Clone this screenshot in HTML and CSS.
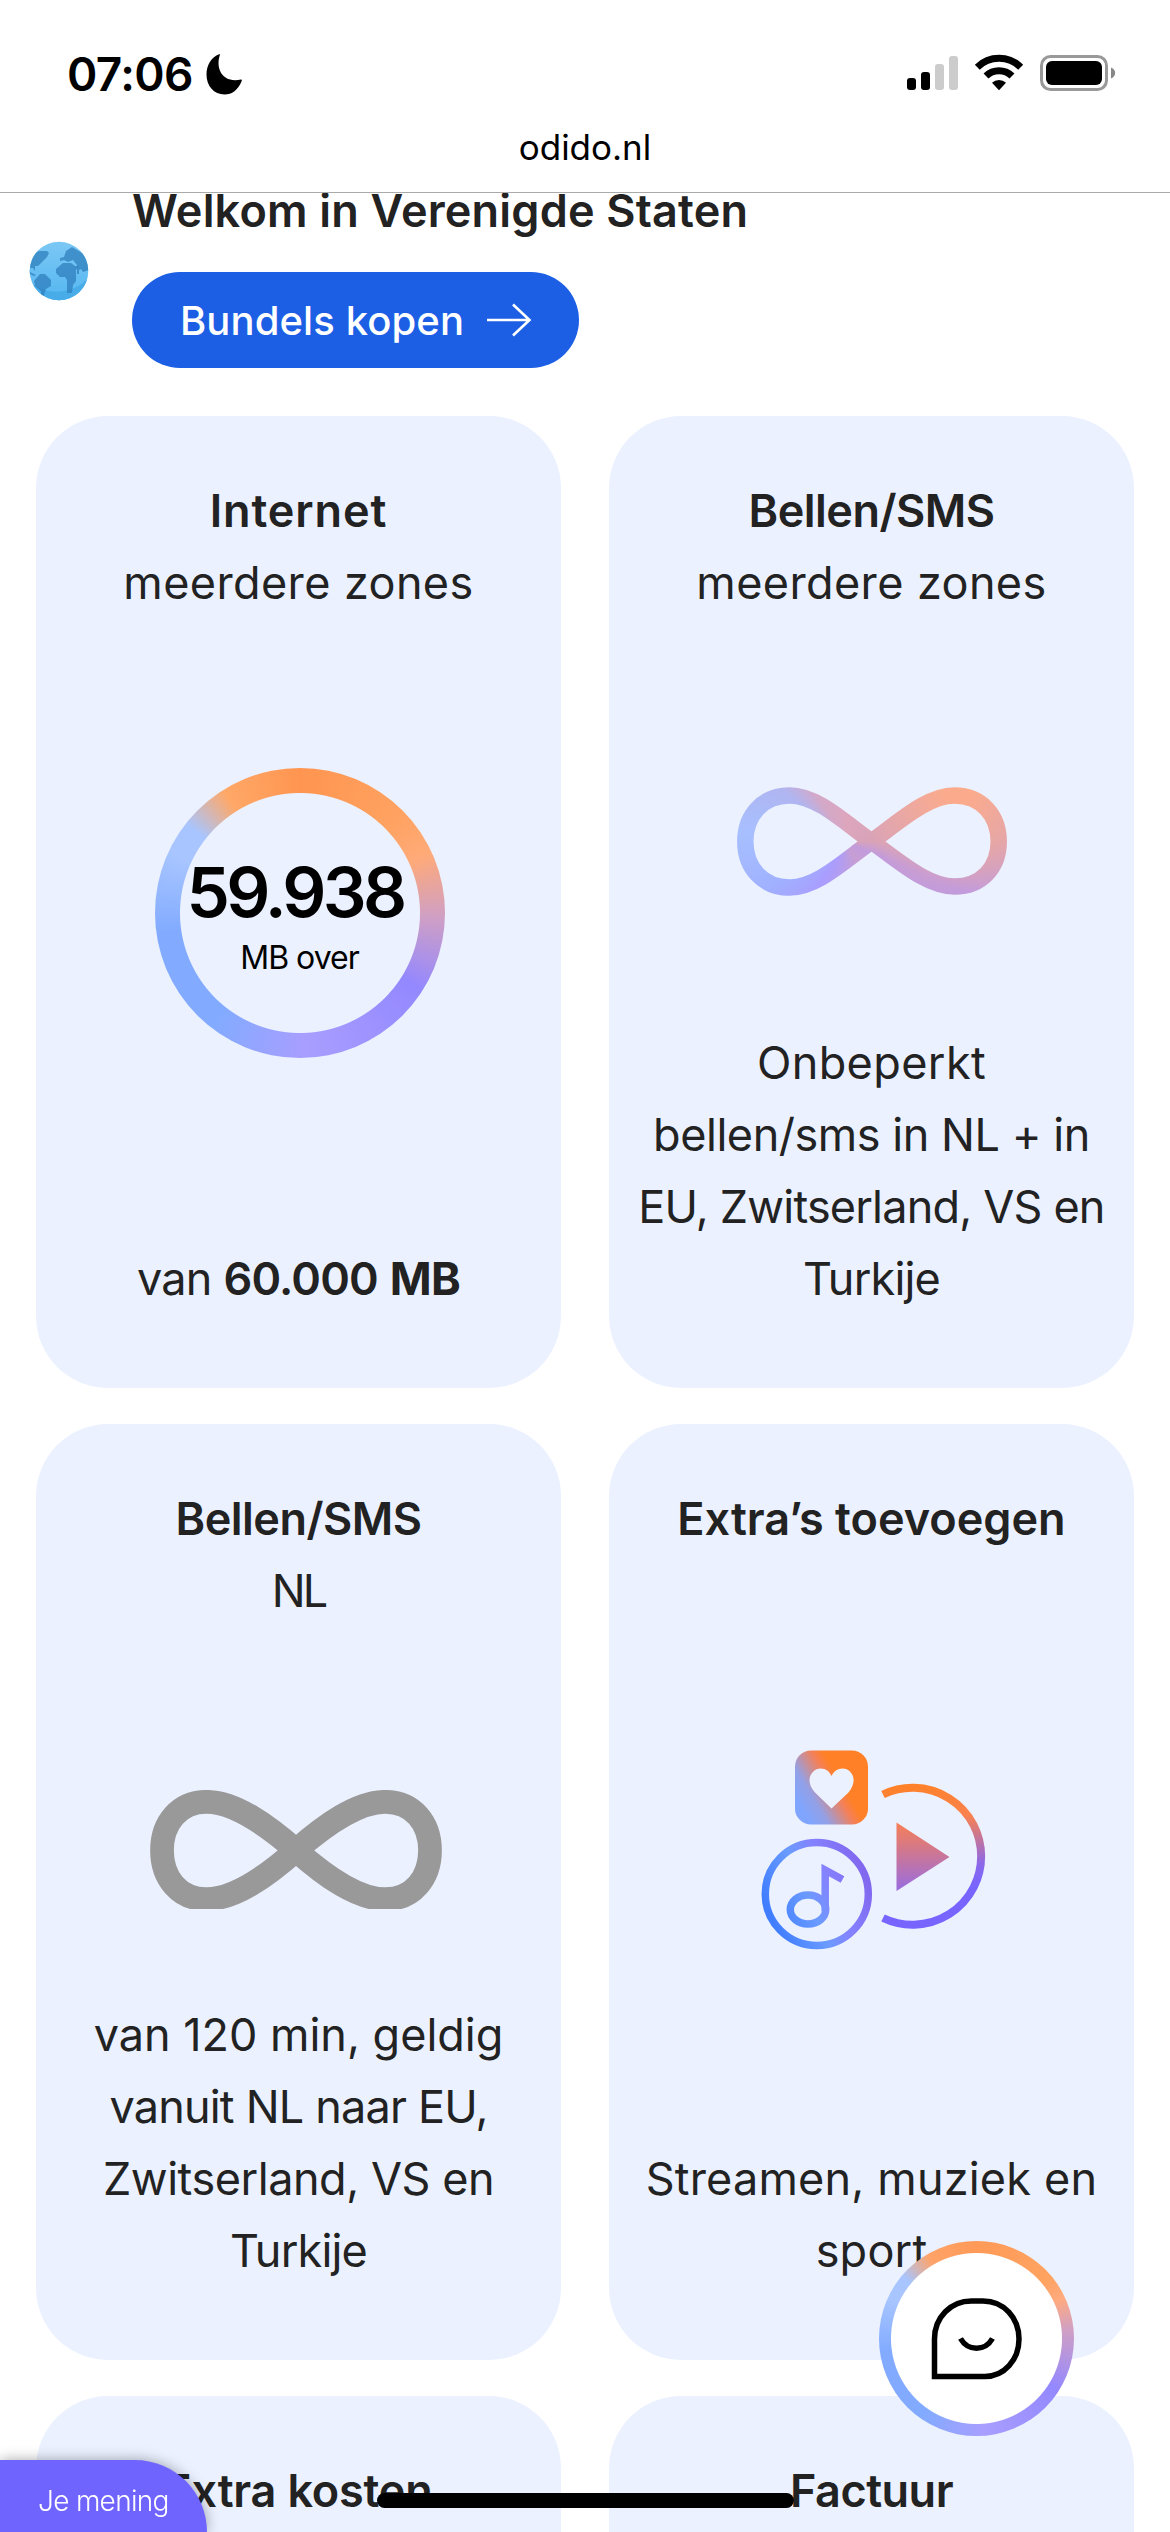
FILE: index.html
```html
<!DOCTYPE html>
<html lang="nl">
<head>
	<meta charset="UTF-8">
	<title>odido.nl</title>
	<link rel="stylesheet" href="styles.css">
</head>
<body>
	<div id="topbar">
		<div class="status">
			<span class="time">07:06</span>
			<svg class="moon" width="36" height="41" viewBox="0 0 36 41">
				<path d="M14 0.5C9 15 17 29.500 35 25.500C36 25.300 36 26 35.500 27.500C32 36 26 40.500 18.500 40.500C8 40.500 0.500 32 0.500 20.500C0.500 11 5.500 3.500 12.500 0.600C13.500 0.200 14.200 0 14 0.500Z"/>
			</svg>
			<svg class="signals" width="212" height="40" viewBox="0 0 212 40">
				<rect x="0" y="24" width="9" height="12" rx="3"/>
				<rect x="14" y="18" width="9" height="18" rx="3"/>
				<g fill="#ccc">
					<rect x="28" y="10" width="9" height="26" rx="3"/>
					<rect x="42" y="2" width="9" height="34" rx="3"/>
				</g>
				<g fill="none" stroke="#000" stroke-width="7">
					<path d="M70.300 13.200A31 31 0 0 1 113.700 13.200"/>
					<path d="M79 22A18.500 18.500 0 0 1 105 22"/>
				</g>
				<path d="M92 36.300L85 28.800A10 10 0 0 1 99 28.800Z"/>
				<rect x="134.500" y="2.500" width="65" height="33" rx="9" fill="none" stroke="#999" stroke-width="3"/>
				<rect x="139" y="7" width="56" height="24" rx="6"/>
				<path d="M204 13.500C209.500 15.500 209.500 22.500 204 24.500Z" fill="#888"/>
			</svg>
		</div>
		<p class="url">odido.nl</p>
	</div>

	<div id="page">
		<div class="welcome">
			<svg class="globe" width="60" height="60" viewBox="0 0 60 60">
				<defs>
					<linearGradient id="sea" x1="0" y1="0" x2="0" y2="1">
						<stop offset="0" stop-color="#7cc8f5"/>
						<stop offset="1" stop-color="#54b6f0"/>
					</linearGradient>
					<clipPath id="ball"><circle cx="30" cy="30" r="29.300"/></clipPath>
				</defs>
				<g clip-path="url(#ball)">
					<rect width="60" height="60" fill="url(#sea)"/>
					<path d="M0 39C12 55 45 55 60 36V60H0Z" fill="#47ace8"/>
					<g fill="#2f7fbd" fill-opacity=".75">
						<path d="M0 15L10 10H18L20 12L18 16L9 25H6V30L4 27H1V31L7 34L5 35L-1 32Z"/>
						<path d="M5 40L11 33H16L22 39V45L17 48L15 54V59L12 57V50L6 45Z"/>
						<path d="M27 28L34 22H42L46 25H50L47 29V40L44 44L43 52H38V39L36 36H31L27 32Z"/>
						<path d="M31 17L35 16L37 10L43 6L60 16V29L54 31L52 28L50 29V33H48V24L44 19L39 21L35 19L31 20Z"/>
					</g>
				</g>
			</svg>
			<div>
				<h2>Welkom in Verenigde Staten</h2>
				<a class="button" href="#">Bundels kopen
					<svg width="45" height="34" viewBox="0 0 45 34"><path d="M0 17H42M26 1.500L42.500 17L26 32.500" fill="none" stroke="#fff" stroke-width="2.600"/></svg>
				</a>
			</div>
		</div>

		<div class="cards">
			<div class="card">
				<h3 class="wide">Internet</h3>
				<p class="zones">meerdere zones</p>
				<div class="ring">
					<strong>59.938</strong>
					<span>MB over</span>
				</div>
				<p class="note tight">van <b>60.000</b> <b class="unit">MB</b></p>
			</div>

			<div class="card">
				<h3>Bellen/SMS</h3>
				<p class="zones">meerdere zones</p>
				<div class="infinity"><svg width="270" height="109" viewBox="0 0 270 109">
					<defs>
						<mask id="loopMask">
							<path d="M134.500 54.500C107 35 80 8.500 52.500 8.500C26 8.500 8.300 28 8.300 54.500C8.300 81 26 100.500 52.500 100.500C80 100.500 107 74 134.500 54.500C162 35 190 8.500 217.500 8.500C244 8.500 261.700 28 261.700 54.500C261.700 81 244 99.500 217.500 99.500C190 99.500 162 74 134.500 54.500Z" fill="none" stroke="#fff" stroke-width="16.500"/>
						</mask>
					</defs>
					<foreignObject width="270" height="109" mask="url(#loopMask)"><div class="sweep"></div></foreignObject>
				</svg></div>
				<p class="note"><span class="zones">Onbeperkt</span><br><span class="snug">bellen/sms in NL + in</span><br><span class="tight">EU, Zwitserland, VS en</span><br><span class="tight">Turkije</span></p>
			</div>

			<div class="card">
				<h3>Bellen/SMS</h3>
				<p class="code">NL</p>
				<div class="infinity gray"><svg width="292" height="119" viewBox="0 0 292 119">
					<path d="M146 60.300C117 35 85 11.800 56.300 11.800C29 11.800 12 33 12 60.300C12 88 29 109.200 56.300 109.200C85 109.200 117 86 146 60.300C175 35 207 11.800 235.300 11.800C263 11.800 280 33 280 60.300C280 88 263 109.200 235.300 109.200C207 109.200 175 86 146 60.300Z" fill="none" stroke="#999" stroke-width="23.700"/>
				</svg></div>
				<p class="note">van 120 min, geldig<br><span class="tight">vanuit NL naar EU,</span><br><span class="snug">Zwitserland, VS en</span><br><span class="tight">Turkije</span></p>
			</div>

			<div class="card">
				<h3 class="extras">Extra’s toevoegen</h3>
				<svg class="media" width="300" height="260" viewBox="1.500 0 300 260">
					<defs>
						<linearGradient id="heart" x1="0" y1=".65" x2=".75" y2=".2">
							<stop offset="0" stop-color="#7fa5ff"/>
							<stop offset=".25" stop-color="#93a0e6"/>
							<stop offset=".6" stop-color="#f48058"/>
							<stop offset=".75" stop-color="#ff8026"/>
						</linearGradient>
						<linearGradient id="play" gradientUnits="userSpaceOnUse" x1="0" y1="100" x2="0" y2="175">
							<stop offset="0" stop-color="#fb8050"/>
							<stop offset="1" stop-color="#926bea"/>
						</linearGradient>
						<linearGradient id="arc" gradientUnits="userSpaceOnUse" x1="190" y1="64" x2="205" y2="208">
							<stop offset="0" stop-color="#ff8128"/>
							<stop offset=".25" stop-color="#fb824d"/>
							<stop offset=".6" stop-color="#8c68ea"/>
							<stop offset=".75" stop-color="#7864ff"/>
						</linearGradient>
						<linearGradient id="disc" gradientUnits="userSpaceOnUse" x1="50" y1="195" x2="145" y2="155">
							<stop offset="0" stop-color="#417eff"/>
							<stop offset=".4" stop-color="#6b9bff"/>
							<stop offset=".65" stop-color="#8582ff"/>
							<stop offset="1" stop-color="#8168ef"/>
						</linearGradient>
					</defs>
					<rect x="74.500" y="30.500" width="73" height="74" rx="16" fill="url(#heart)"/>
					<path d="M111 88.500L94.500 72.500C83 60 92 48.500 100 48.500C105.500 48.500 109 51.500 111 56C113 51.500 117 48.500 122 48.500C131 48.500 138.500 60 128 72.500Z" fill="#ecf1ff"/>
					<path d="M162.500 74.500A68.500 68.500 0 1 1 162.500 198" fill="none" stroke="url(#arc)" stroke-width="8"/>
					<path d="M176 102.500L229 137L176 171Z" fill="url(#play)"/>
					<g fill="none" stroke="url(#disc)" stroke-width="7.500">
						<circle cx="96.300" cy="174" r="51.500"/>
						<ellipse cx="87.500" cy="189.500" rx="17.700" ry="14.500"/>
						<path d="M104.700 191V150L122 159.500"/>
					</g>
				</svg>
				<p class="note streams">Streamen, muziek en<br>sport</p>
			</div>

			<div class="card"><h3 class="costs">Extra kosten</h3></div>
			<div class="card"><h3>Factuur</h3></div>
		</div>
	</div>

	<div id="chat">
		<svg width="91" height="82" viewBox="0 0 91 82" fill="none" stroke="#000" stroke-width="5.500">
			<path d="M3.500 78.500V41C3.500 19 20 3 40.500 3H52C73 3 88 20 88 41C88 62 73 78.500 54 78.500Z"/>
			<path d="M29.500 40.500C37 53.500 54 53.500 61.500 40.500"/>
		</svg>
	</div>
	<div id="feedback">Je mening</div>
	<div id="homebar"></div>
</body>
</html>
```
FILE: styles.css
```css
* {
	box-sizing: border-box;
}
body {
	margin: 0;
	background: #fff;
	color: #222;
	font-family: Inter, "Liberation Sans", sans-serif;
}
h2, h3, p {
	margin: 0;
}

/* status bar and address */
#topbar {
	position: fixed;
	top: 0;
	left: 0;
	z-index: 2;
	width: 100%;
	height: 193px;
	padding-top: 46px;
	background: #fff;
	border-bottom: 1px solid #aaa;
	color: #000;
}
.status {
	display: flex;
	align-items: center;
	height: 56px;
	padding: 0 51px 0 67px;
}
.time {
	font-size: 46px;
	font-weight: 600;
	letter-spacing: -0.6px;
}
.moon {
	margin-left: 13px;
}
.signals {
	margin-left: auto;
}
.url {
	margin-top: 23px;
	font-size: 35px;
	line-height: 44px;
	text-align: center;
}

/* welcome */
#page {
	height: 2532px;
	padding: 175px 36px 0 29px;
	overflow: hidden;
}
.welcome {
	display: flex;
	align-items: flex-start;
	height: 241px;
}
.globe {
	flex: none;
	margin: 66px 43px 0 0;
}
.welcome h2 {
	font-size: 45px;
	font-weight: 600;
	line-height: 72px;
	letter-spacing: 0.2px;
}
.button {
	display: flex;
	align-items: center;
	gap: 23px;
	width: 447px;
	height: 96px;
	margin-top: 25px;
	padding-left: 48px;
	border-radius: 48px;
	background: #1c5fe5;
	color: #fff;
	font-size: 40px;
	font-weight: 500;
	letter-spacing: 0.1px;
	text-decoration: none;
}

/* cards */
.cards {
	display: grid;
	grid-template-columns: 525px 525px;
	grid-template-rows: 972px 936px 300px;
	gap: 36px 48px;
	padding-left: 7px;
}
.card {
	display: flex;
	flex-direction: column;
	align-items: center;
	padding: 59px 0 73px;
	border-radius: 72px;
	background: #ebf1ff;
	text-align: center;
}
.card h3,
.card p {
	font-size: 45px;
	line-height: 72px;
	white-space: nowrap;
}
.card h3 {
	font-weight: 600;
	letter-spacing: -0.5px;
}
.card h3.wide { letter-spacing: 0.9px;}
.card h3.extras { letter-spacing: 0;}
.card h3.costs { letter-spacing: -0.2px;}
.card .zones { letter-spacing: 0.4px;}
.card .streams { letter-spacing: 0.2px;}
.card .snug { letter-spacing: -0.45px;}
.card .tight { letter-spacing: -0.8px;}
.card .code { letter-spacing: -3px;}
.card .note {
	margin-top: auto;
}
.note b {
	font-weight: 600;
}
.note .unit {
	font-weight: 700;
}
.ring {
	display: flex;
	flex-direction: column;
	align-items: center;
	width: 290px;
	height: 290px;
	margin-top: 149px;
	margin-left: 2px;
	padding-top: 83px;
	border-radius: 50%;
	background: radial-gradient(closest-side, #ebf1ff 119.5px, transparent 120.5px),
	conic-gradient(#ff9550, #ffa261 45deg, #ffaa78 65deg, #cf9fc5 92deg, #9488ff 122deg, #a89eff 178deg, #82abff 218deg, #82abff 262deg, #a8c5ff 295deg, #a8c5ff 308deg, #ffa868 328deg, #ff9550);
	color: #000;
}
.ring strong {
	margin-left: -9px;
	font-size: 69px;
	font-weight: 600;
	line-height: 82px;
	letter-spacing: -3.7px;
}
.ring span {
	font-size: 32px;
	line-height: 49px;
	letter-spacing: -1px;
}
.infinity {
	height: 109px;
	margin-top: 168px;
}
.sweep {
	width: 270px;
	height: 109px;
	background: radial-gradient(circle at 82% 0, #fbab8c 15px, rgba(251,171,140,0) 105px),
	conic-gradient(at 40% 50%, #dda6bd, #d8a3b8 90deg, #c29bdc 113deg, #c79ed3 150deg, #a99dff 210deg, #a0b1ff 240deg, #a7bfff 275deg, #b0b5f0 310deg, #d3a8c8 328deg, #dda6bd);
}
.gray {
	height: 119px;
	margin-top: 163px;
	margin-left: -5px;
}
.media {
	margin-top: 165px;
}

/* floating items */
#chat {
	position: fixed;
	top: 2241px;
	left: 879px;
	display: flex;
	align-items: center;
	justify-content: center;
	width: 195px;
	height: 195px;
	border-radius: 50%;
	background: radial-gradient(closest-side, #fff 85px, transparent 86px),
	conic-gradient(#ff9a58, #ffa361 50deg, #ffaa80 65deg, #cf9fc5 85deg, #9488ff 122deg, #a89eff 175deg, #82abff 215deg, #82abff 262deg, #a8c5ff 295deg, #a8c5ff 310deg, #ffa368 330deg, #ff9a58);
}
#feedback {
	position: fixed;
	left: 0;
	bottom: 0;
	width: 207px;
	height: 72px;
	padding-left: 38px;
	border-radius: 0 72px 0 0;
	background: #7064ff;
	box-shadow: 0 0 14px rgba(0,0,0,.35);
	color: #fff;
	font-size: 28px;
	font-weight: 300;
	line-height: 83px;
	letter-spacing: -0.7px;
}
#homebar {
	position: fixed;
	left: 377px;
	bottom: 24px;
	width: 417px;
	height: 15px;
	border-radius: 8px;
	background: #000;
}
```
